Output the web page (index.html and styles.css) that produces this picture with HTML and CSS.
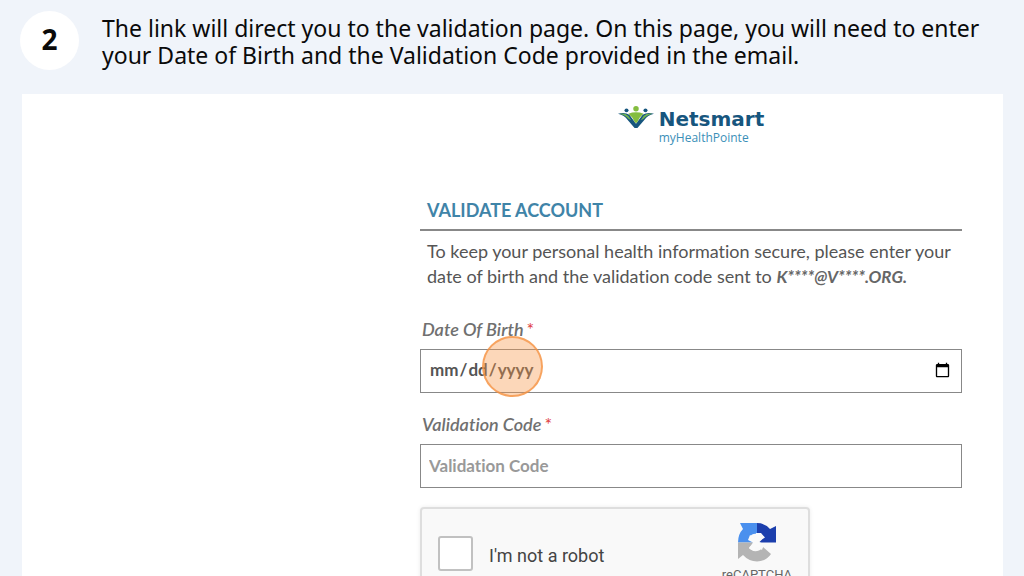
FILE: index.html
```
<!DOCTYPE html>
<html lang="en">
<head>
<meta charset="utf-8">
<meta name="viewport" content="width=device-width, initial-scale=1">
<title>Validate account</title>
<link rel="stylesheet" href="styles.css">
</head>
<body>
<header class="step">
  <span class="step-number">2</span>
  <p class="step-text">The link will direct you to the validation page. On this page, you will need to enter your Date of Birth and the Validation Code provided in the email.</p>
</header>
<main class="panel">
  <form class="form">
    <div class="brand">
      <svg class="brand-mark" viewBox="0 0 38 24" aria-hidden="true">
        <circle cx="9" cy="5" r="2.1" fill="#17567e"/>
        <circle cx="29" cy="5" r="2.1" fill="#17567e"/>
        <circle cx="19" cy="3.4" r="2.9" fill="#84bd3f"/>
        <path d="M0 8.500Q7 6.500 12 9.500L19 19L26 9.500Q31 6.500 38 8.500Q31 10 28 15L20.500 23.500H17.500L10 15Q7 10 0 8.500Z" fill="#17567e"/>
        <path d="M2 8.500Q8 8 11 11L14 15.500Q11 14.500 9 12Q7 10 2 8.500ZM36 8.500Q30 8 27 11L24 15.500Q27 14.500 29 12Q31 10 36 8.500Z" fill="#6fb352"/>
        <path d="M11 8.500Q19 5.500 27 8.500L23 12.500L20 18H18L15 12.500Z" fill="#84bd3f"/>
      </svg>
      <div class="brand-name">
        <span class="brand-company">Netsmart</span>
        <span class="brand-product">myHealthPointe</span>
      </div>
    </div>
    <h1 class="title">VALIDATE ACCOUNT</h1>
    <p class="intro">To keep your personal health information secure, please enter your date of birth and the validation code sent to <em class="email">K****@V****.ORG.</em></p>
    <div class="field">
      <label class="label" for="dob">Date Of Birth<span class="required">*</span></label>
      <div class="control">
        <input class="input" id="dob" type="date">
        <span class="click-marker"></span>
      </div>
    </div>
    <div class="field">
      <label class="label" for="code">Validation Code<span class="required">*</span></label>
      <input class="input" id="code" type="text" placeholder="Validation Code">
    </div>
    <div class="captcha">
      <input class="captcha-box" id="robot" type="checkbox">
      <label class="captcha-label" for="robot">I'm not a robot</label>
      <div class="captcha-brand">
        <svg class="captcha-logo" viewBox="0 0 40 40" aria-hidden="true">
          <path d="M20 1V12Q15 11 13 15L17 19.500V20.500H1Q1 12 6 7L3 1Z" fill="#4a90ee"/>
          <path d="M20 1Q28 1 33 7L39 4V20.500H22L27 15.500Q25 12 20 12Z" fill="#1c3fad"/>
          <path d="M1 20.500H17L12 25.500Q16 31 22 28.500Q25 27 26 25L34 32Q29 39.500 20 39.500Q12 39.500 6 33L1 37Z" fill="#b4b4b4"/>
          <path d="M11 18L13 13L18 16L19 11H24L28 15.500L21 19.500L27 22L25 28L19 24L17 29L12 26.500L16 20.500Z" fill="#fafafa"/>
        </svg>
        <span class="captcha-name">reCAPTCHA</span>
      </div>
    </div>
  </form>
</main>
</body>
</html>
```
FILE: styles.css
```
* { box-sizing: border-box; }
body {
  margin: 0;
  height: 100vh;
  overflow: hidden;
  display: flex;
  flex-direction: column;
  background: #f0f4fa;
  font-family: Lato, "Liberation Sans", sans-serif;
  font-variant-ligatures: none;
  color: #555;
}
.step {
  display: flex;
  align-items: flex-start;
  gap: 23px;
  padding: 11px 20px 24px;
  font-family: "Noto Sans", sans-serif;
  color: #0a0a0a;
}
.step-number {
  flex: none;
  display: grid;
  place-items: center;
  width: 59px;
  height: 59px;
  padding-bottom: 4px;
  border-radius: 50%;
  background: #fff;
  font-size: 28px;
  font-weight: 700;
}
.step-text { margin: 4px 0 0; font-size: 23px; line-height: 27px; font-weight: 450; }
.panel {
  flex: 1;
  min-height: 0;
  overflow: hidden;
  display: grid;
  grid-template-columns: 398fr 542fr 41fr;
  margin: 0 21px 0 22px;
  background: #fff;
}
.form { grid-column: 2; padding-top: 11px; }
.brand { display: flex; justify-content: center; gap: 5px; }
.brand-mark { width: 36px; height: 24px; }
.brand-name { display: flex; flex-direction: column; }
.brand-company {
  padding-top: 2px;
  font: 700 20px/24px "DejaVu Sans", sans-serif;
  color: #17567e;
}
.brand-product {
  font: 12px/14px "Open Sans", sans-serif;
  color: #3b8fb8;
}
.title {
  margin: 53px 0 0;
  padding: 0 7px 7px;
  border-bottom: 2px solid #888;
  font-size: 18px;
  line-height: 24px;
  font-weight: 700;
  color: #3f84a8;
}
.intro { margin: 8px 0 0; padding: 0 7px; font-size: 18px; line-height: 25px; }
.email { font-size: 17px; font-weight: 700; color: #666; }
.field { margin-top: 28px; }
.field + .field { margin-top: 19px; }
.label {
  display: block;
  margin-bottom: 8px;
  padding-left: 2px;
  font-size: 18px;
  line-height: 24px;
  font-style: italic;
  font-weight: 600;
  color: #707070;
}
.required { margin-left: 3px; color: #e03c3c; font-weight: 400; font-style: normal; }
.control { position: relative; }
.input {
  display: block;
  width: 100%;
  height: 44px;
  padding: 0 8px 2px;
  border: 1px solid #888;
  border-radius: 0;
  background: #fff;
  color: #555;
  font: 700 17px/24px Lato, sans-serif;
  font-variant-ligatures: none;
}
.input::placeholder { color: #999; opacity: 1; }
.click-marker {
  position: absolute;
  left: 62px;
  top: -13px;
  width: 61px;
  height: 61px;
  border: 2px solid rgba(245, 145, 65, .75);
  border-radius: 50%;
  background: rgba(247, 150, 70, .38);
  pointer-events: none;
}
.captcha {
  display: flex;
  align-items: flex-start;
  width: 390px;
  height: 100px;
  margin-top: 19px;
  padding: 13px 16px;
  border: 2px solid #dedede;
  border-radius: 4px;
  background: #f9f9f9;
  box-shadow: 0 0 4px rgba(0, 0, 0, .08);
  font-family: Roboto, sans-serif;
}
.captcha-box {
  appearance: none;
  width: 35px;
  height: 35px;
  margin: 14px 16px 0 0;
  border: 2px solid #c1c1c1;
  border-radius: 3px;
  background: #fff;
}
.captcha-label { margin-top: 22px; font-size: 18px; line-height: 24px; color: #444; }
.captcha-brand { margin-left: auto; display: flex; flex-direction: column; align-items: center; }
.captcha-logo { width: 40px; height: 40px; }
.captcha-name { margin-top: 5px; font-size: 13px; line-height: 16px; color: #666; }
```
